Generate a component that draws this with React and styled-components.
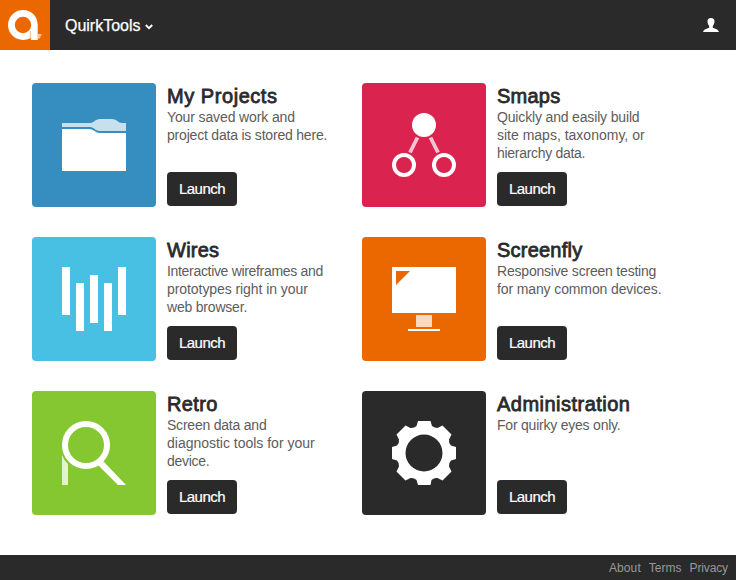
import React from "react";
import styled, { createGlobalStyle } from "styled-components";

const GlobalStyle = createGlobalStyle`
  * { box-sizing: border-box; }
  body {
    margin: 0;
    background: #fff;
    color: #2a2a2a;
    font-family: "Liberation Sans", Arial, Helvetica, sans-serif;
  }
`;

const Page = styled.div`
  display: flex;
  flex-direction: column;
  height: 580px;
  min-width: 736px;
  overflow: hidden;
`;

const Header = styled.header`
  display: flex;
  align-items: center;
  flex: none;
  height: 50px;
  background: #2a2a2a;
  color: #fff;
`;

const LogoTile = styled.a`
  width: 50px;
  height: 50px;
  background: #eb6800;
`;

const BrandMenu = styled.button`
  display: flex;
  align-items: center;
  gap: 5px;
  margin-left: 15px;
  padding: 2px 0 0;
  border: 0;
  background: none;
  color: #fff;
  font: 16px/20px "Liberation Sans", Arial, sans-serif;
  letter-spacing: -0.01px;
  -webkit-text-stroke: 0.25px #fff;
  svg { margin-top: 1px; }
`;

const Account = styled.a`
  display: flex;
  margin-left: auto;
  margin-right: 17px;
`;

const Main = styled.main`
  flex: 1;
  display: grid;
  grid-template-columns: 300px 300px;
  grid-auto-rows: 124px;
  gap: 30px;
  align-content: start;
  padding: 33px 32px 0;
`;

const Tool = styled.article`
  display: flex;
  gap: 11px;
`;

const Tile = styled.div`
  flex: none;
  width: 124px;
  height: 124px;
  padding: 30px;
  border-radius: 4px;
  background: ${(p) => p.$color};
  svg { display: block; }
`;

const Info = styled.div`
  display: flex;
  flex-direction: column;
  align-items: flex-start;
  white-space: nowrap;
`;

const Title = styled.h2`
  margin: 0;
  height: 25px;
  font-size: 20px;
  line-height: 26px;
  font-weight: 400;
  letter-spacing: ${(p) => p.$tracking}px;
  -webkit-text-stroke: 0.8px #2a2a2a;
`;

const Line = styled.span`
  display: block;
  height: 18px;
  font-size: 14px;
  line-height: 18px;
  letter-spacing: ${(p) => p.$tracking}px;
  color: #5c5c5c;
`;

const Launch = styled.button`
  width: 70px;
  height: 34px;
  margin-top: auto;
  margin-bottom: 1px;
  padding: 0;
  border: 0;
  border-radius: 4px;
  background: #2a2a2a;
  color: #fff;
  font: 15px/34px "Liberation Sans", Arial, sans-serif;
  letter-spacing: -0.55px;
  -webkit-text-stroke: 0.2px #fff;
`;

const Footer = styled.footer`
  display: flex;
  justify-content: flex-end;
  gap: 8px;
  flex: none;
  height: 25px;
  padding-right: 8px;
  background: #2a2a2a;
`;

const FooterLink = styled.a`
  font-size: 12px;
  line-height: 26px;
  letter-spacing: ${(p) => p.$tracking}px;
  color: #999;
`;

const Glyph = ({ children }) => (
  <svg width="64" height="64" viewBox="0 0 64 64" fill="#fff">{children}</svg>
);

const FolderIcon = () => (
  <Glyph>
    <path opacity=".73" d="M0 10H28C32 10 33 6 38 6H50C55 6 56 10 60 10H64V18H38C33 18 32 14 28 14H0Z" />
    <path d="M0 16H27C32 16 33 20 38 20H64V58H0Z" />
  </Glyph>
);

const NodesIcon = () => (
  <Glyph>
    <circle cx="32" cy="12" r="12" />
    <path d="M25.500 24.500L18 39.500M38.500 24.500L46 39.500" stroke="#fff" strokeWidth="3.800" opacity=".73" />
    <circle cx="12" cy="52" r="10" fill="none" stroke="#fff" strokeWidth="4" />
    <circle cx="52" cy="52" r="10" fill="none" stroke="#fff" strokeWidth="4" />
  </Glyph>
);

const BarsIcon = () => (
  <Glyph>
    <path d="M0 0H8V48H0ZM14 16H22V64H14ZM28 8H36V56H28ZM42 16H50V64H42ZM56 0H64V48H56Z" />
  </Glyph>
);

const MonitorIcon = () => (
  <Glyph>
    <path fillRule="evenodd" d="M0 0H64V46H0ZM4 4V18L18 4Z" />
    <path opacity=".75" d="M24 48H40V60H24Z" />
    <path d="M16 62H48V64H16Z" />
  </Glyph>
);

const SearchIcon = () => (
  <Glyph>
    <path opacity=".77" d="M0 34Q2 39.500 6 43V64H0Z" />
    <circle cx="24" cy="24" r="21" fill="none" stroke="#fff" strokeWidth="6" />
    <path d="M36 44L41 40L64 64H56Z" />
  </Glyph>
);

const GearIcon = () => (
  <Glyph>
    <path
      fillRule="evenodd"
      d="M26 0H38.500L40 5Q42.500 7 45.500 7L50.500 4.500L59.500 13.500L57 18.500Q56.500 22 59 24.500L64 26V38L59 39.500Q56.500 42 57 45.500L59.500 50.500L50.500 59.500L45.500 57Q42 56.500 39.500 59L38.500 64H26L24.500 59Q22 56.500 18.500 57L13.500 59.500L4.500 50.500L7 45.500Q7.500 42 5 39.500L0 38V26L5 24.500Q7.500 22 7 18.500L4.500 13.500L13.500 4.500L18.500 7Q22 7.500 24.500 5ZM32 13.500A18.500 18.500 0 1 0 32 50.500A18.500 18.500 0 1 0 32 13.500Z"
    />
  </Glyph>
);

const tools = [
  { title: "My Projects", tracking: 0.55, color: "#368dbf", Icon: FolderIcon, lines: [["Your saved work and", -0.12], ["project data is stored here.", -0.2]] },
  { title: "Smaps", tracking: 0.25, color: "#db234f", Icon: NodesIcon, lines: [["Quickly and easily build", -0.16], ["site maps, taxonomy, or", 0], ["hierarchy data.", -0.3]] },
  { title: "Wires", tracking: 0.25, color: "#48c0e4", Icon: BarsIcon, lines: [["Interactive wireframes and", -0.32], ["prototypes right in your", -0.07], ["web browser.", -0.2]] },
  { title: "Screenfly", tracking: 0.22, color: "#eb6800", Icon: MonitorIcon, lines: [["Responsive screen testing", -0.2], ["for many common devices.", -0.12]] },
  { title: "Retro", tracking: 0.35, color: "#85c731", Icon: SearchIcon, lines: [["Screen data and", -0.22], ["diagnostic tools for your", -0.01], ["device.", -0.3]] },
  { title: "Administration", tracking: 0.48, color: "#2a2a2a", Icon: GearIcon, lines: [["For quirky eyes only.", -0.22]] },
];

export default function App() {
  return (
    <Page>
      <GlobalStyle />
      <Header>
        <LogoTile aria-label="QuirkTools">
          <svg width="50" height="50" viewBox="0 0 50 50">
            <path fill="#fff" d="M23 10C31.500 10 37.700 16.500 37.700 25V40H30.700V38Q27 40 23 40A15 15 0 0 1 23 10ZM23 16.800A8.200 8.200 0 1 0 23 33.200A8.200 8.200 0 1 0 23 16.800Z" fillRule="evenodd" />
            <path d="M30.300 31V40" stroke="#eb6800" strokeWidth=".5" />
            <path fill="#fff" opacity=".6" d="M37.700 34H42L39.500 38.500L37.700 39Z" />
          </svg>
        </LogoTile>
        <BrandMenu>
          QuirkTools
          <svg width="8" height="6" viewBox="0 0 8 6" fill="none" stroke="#fff" strokeWidth="1.9">
            <path d="M.8 1L4 4.200L7.200 1" />
          </svg>
        </BrandMenu>
        <Account aria-label="Account">
          <svg width="16" height="14" viewBox="0 0 16 14" fill="#fff">
            <path d="M8 0C10.500 0 11.500 1.300 11.500 3.300C11.500 5.500 10.700 7 9.800 8V9.700C11 10.500 15.500 11 15.900 14H.1C.5 11 5 10.500 6.200 9.700V8C5.300 7 4.500 5.500 4.500 3.300C4.500 1.300 5.500 0 8 0Z" />
          </svg>
        </Account>
      </Header>
      <Main>
        {tools.map(({ title, tracking, color, Icon, lines }) => (
          <Tool key={title}>
            <Tile $color={color}><Icon /></Tile>
            <Info>
              <Title $tracking={tracking}>{title}</Title>
              {lines.map(([text, spacing]) => <Line key={text} $tracking={spacing}>{text}</Line>)}
              <Launch>Launch</Launch>
            </Info>
          </Tool>
        ))}
      </Main>
      <Footer>
        <FooterLink $tracking={0.1}>About</FooterLink>
        <FooterLink $tracking={0}>Terms</FooterLink>
        <FooterLink $tracking={-0.12}>Privacy</FooterLink>
      </Footer>
    </Page>
  );
}
